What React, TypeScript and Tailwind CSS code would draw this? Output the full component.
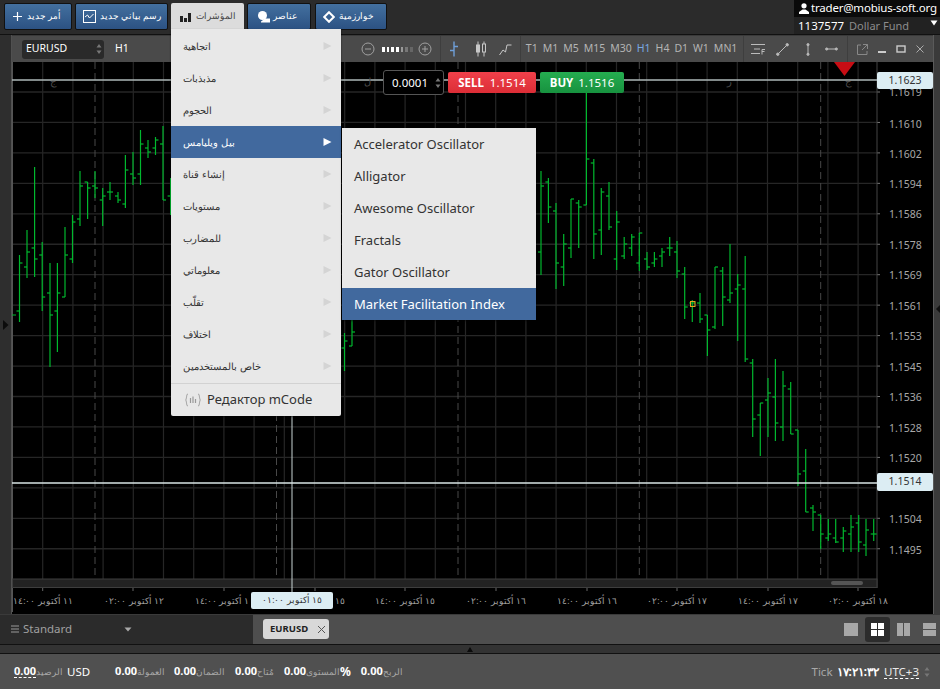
import React from "react";

const sans = "font-['Noto_Sans','DejaVu_Sans',sans-serif]";
const deja = "font-['DejaVu_Sans',sans-serif]";

// x, high, low, open, close
const bars: number[][] = [
  [19.5, 255, 322, 311, 263], [27, 230, 278, 267, 252], [34.6, 167, 277, 248, 259], [42.2, 242, 311, 255, 297],
  [50, 263, 367, 293, 315], [57.4, 263, 352, 311, 293], [65, 227, 297, 297, 255], [72.5, 215, 263, 259, 222],
  [80, 171, 226, 219, 186], [87.6, 182, 219, 182, 188], [95, 171, 198, 186, 188], [102.7, 188, 226, 200, 196],
  [110, 182, 200, 192, 192], [118, 192, 203, 196, 200], [125.4, 155, 208, 204, 170], [133, 152, 185, 174, 178],
  [140.5, 130, 185, 174, 144], [148, 140, 158, 148, 152], [155.5, 137, 155, 148, 140], [163, 126, 200, 144, 200],
  [170.6, 178, 215, 196, 196],
  [344.5, 333, 371, 348, 341], [352, 320, 346, 346, 332],
  [541, 171, 275, 252, 186], [548.4, 178, 223, 182, 207], [556, 203, 289, 211, 263], [563.7, 234, 286, 267, 244],
  [571, 199, 258, 248, 199], [578.7, 200, 248, 203, 207], [586.4, 92, 205, 205, 159], [593.8, 159, 259, 163, 234],
  [601.3, 188, 255, 230, 192], [609, 182, 230, 196, 227], [616.7, 211, 270, 259, 222], [624.2, 237, 259, 256, 244],
  [631.7, 234, 256, 248, 237], [639.3, 233, 271, 263, 233], [647, 252, 270, 259, 267], [654.4, 252, 267, 263, 259],
  [662, 248, 267, 256, 252], [669.7, 237, 256, 248, 248], [677, 241, 278, 252, 271], [684.7, 267, 319, 274, 307],
  [692.3, 300, 322, 303, 303], [700, 293, 323, 303, 319], [707.4, 315, 356, 315, 330], [715, 267, 329, 327, 267],
  [722.7, 267, 326, 271, 297], [730, 244, 303, 300, 293], [737.7, 274, 341, 289, 285], [745.2, 256, 362, 289, 359],
  [752.7, 359, 437, 363, 419], [760.3, 403, 456, 415, 403], [768, 378, 437, 400, 393], [775.4, 359, 441, 397, 423],
  [783, 371, 441, 427, 386], [790.7, 382, 434, 389, 434], [798, 430, 486, 430, 474], [805.7, 449, 512, 471, 512],
  [813, 505, 531, 508, 512], [820.7, 515, 549, 515, 534], [828.3, 519, 541, 538, 534], [835.7, 519, 543, 538, 542],
  [843.3, 527, 552, 538, 531], [851, 515, 552, 534, 527], [858.7, 515, 552, 523, 542], [866, 519, 556, 545, 530],
  [873.7, 519, 541, 534, 534],
];

const prices: [string, number][] = [
  ["1.1619", 92], ["1.1610", 123.5], ["1.1602", 153.5], ["1.1594", 184], ["1.1586", 214], ["1.1578", 245],
  ["1.1569", 275], ["1.1561", 305.5], ["1.1553", 336], ["1.1545", 367], ["1.1536", 397], ["1.1528", 428],
  ["1.1520", 458], ["1.1504", 519], ["1.1495", 550],
];

const times: [string, number][] = [
  ["١١ أكتوبر ١٤:٠٠", 43], ["١٢ أكتوبر ٠٢:٠٠", 134], ["١ أكتوبر ١٤:٠٠", 222], ["١٥", 340],
  ["١٥ أكتوبر ١٤:٠٠", 405], ["١٦ أكتوبر ٠٢:٠٠", 496], ["١٦ أكتوبر ١٤:٠٠", 587], ["١٧ أكتوبر ٠٢:٠٠", 677],
  ["١٧ أكتوبر ١٤:٠٠", 768], ["١٨ أكتوبر ٠٢:٠٠", 858],
];

const marks: [string, number][] = [["ج", 53], ["ل", 367], ["ر", 730], ["ج", 848]];

const menuItems = ["اتجاهية", "مذبذبات", "الحجوم", "بيل ويليامس", "إنشاء قناة", "مستويات", "للمضارب", "معلوماتي", "تقلّب", "اختلاف", "خاص بالمستخدمين"];
const subItems = ["Accelerator Oscillator", "Alligator", "Awesome Oscillator", "Fractals", "Gator Oscillator", "Market Facilitation Index"];
const frames = ["T1", "M1", "M5", "M15", "M30", "H1", "H4", "D1", "W1", "MN1"];

const hLines = Array.from({ length: 16 }, (_, i) => 92 + i * 30.45);
const vLines = Array.from({ length: 28 }, (_, i) => 42.7 + i * 30.2);
const dashed = [95, 276.5, 458, 639.3, 820.7];
const ticks = [42.7, 133, 224, 315, 405, 496, 587, 677, 768, 858];

const TopButton = ({ icon, className }: { icon: React.ReactNode; className: string }) => (
  <div className={`h-[27px] flex items-center border border-[#111] rounded-[2px] bg-gradient-to-b from-[#43709f] to-[#2c5283] text-white text-[8.5px] ${deja} ${className}`}>
    {icon}
  </div>
);

const Updown = ({ className }: { className?: string }) => (
  <svg width="6" height="12" viewBox="0 0 6 12" className={className}>
    <path d="M3 1 L5.5 4.5 H0.5 Z M3 11 L5.5 7.5 H0.5 Z" fill="#777" />
  </svg>
);

const Stat = ({ value, label, className }: { value: string; label: string; className: string }) => (
  <div className={`flex items-center ${className}`}>
    <span className={`text-[11px] font-bold text-white ${deja}`}>{value}</span>
    <span className={`text-[9px] text-[#a8a8a8] ${deja}`}>{label}</span>
  </div>
);

export default function App() {
  return (
    <div className="w-[940px] h-[689px] overflow-hidden flex flex-col bg-[#2a2a2a] relative">
      {/* top bar */}
      <div className="h-[35px] shrink-0 flex justify-between bg-[#2b2b2b] border-b border-[#111]">
        <div className="flex items-start pt-[3px] pl-[4px] gap-[3px]">
          <TopButton
            className="w-[68px] pl-[7px] gap-[4px]"
            icon={
              <>
                <svg width="11" height="11" viewBox="0 0 11 11"><path d="M5.5 1V10M1 5.5H10" stroke="#fff" strokeWidth="1.2" /></svg>
                <span>أمر جديد</span>
              </>
            }
          />
          <TopButton
            className="w-[93px] pl-[7px] gap-[4px]"
            icon={
              <>
                <svg width="13" height="13" viewBox="0 0 13 13" fill="none" stroke="#fff"><rect x="0.5" y="0.5" width="12" height="12" /><path d="M2 7 L4.5 5 L6.5 8 L10.5 4" /></svg>
                <span>رسم بياني جديد</span>
              </>
            }
          />
          <div className={`w-[73px] h-[27px] flex items-center pl-[9px] gap-[5px] bg-[#dcdcdc] rounded-t-[2px] text-[#444] text-[8.5px] ${deja}`}>
            <svg width="11" height="10" viewBox="0 0 11 10" fill="#222"><rect x="0" y="4" width="3" height="6" /><rect x="4" y="6" width="3" height="4" /><rect x="8" y="1" width="3" height="9" /></svg>
            <span>المؤشرات</span>
          </div>
          <TopButton
            className="w-[64px] pl-[9px] gap-[2px]"
            icon={
              <>
                <svg width="14" height="12" viewBox="0 0 14 12" fill="#fff"><circle cx="5.5" cy="4.5" r="4.5" /><path d="M4 10.5 L8 7.5 H13 V11.5 H4 Z" /></svg>
                <span>عناصر</span>
              </>
            }
          />
          <TopButton
            className="ml-[1px] w-[72px] pl-[7px] gap-[4px]"
            icon={
              <>
                <svg width="12" height="12" viewBox="0 0 12 12" fill="none" stroke="#fff" strokeWidth="2"><path d="M6 1.2 L10.8 6 L6 10.8 L1.2 6 Z" /></svg>
                <span>خوارزمية</span>
              </>
            }
          />
        </div>
        <div className={`w-[146px] h-[34px] bg-[#0a0a0a] flex flex-col text-[11.5px] leading-[16px] ${deja}`}>
          <div className="flex items-center h-[16px] pl-[5px] gap-[2px] text-white">
            <svg width="10" height="11" viewBox="0 0 10 11" fill="#fff" className="shrink-0"><circle cx="5" cy="2.8" r="2.6" /><path d="M0 11 V9 L3.5 6.5 H6.5 L10 9 V11 Z" /></svg>
            <span className="whitespace-nowrap tracking-[-0.2px]">trader@mobius-soft.org</span>
          </div>
          <div className="flex items-center h-[17px] mt-[1px] pl-[4px] bg-[#222] relative">
            <span className="text-white">1137577</span>
            <span className="ml-[5px] text-[11px] text-[#8c8c8c]">Dollar Fund</span>
            <svg width="8" height="6" viewBox="0 0 8 6" className="absolute right-[2px] top-[3px]"><path d="M0.5 0.5 H7.5 L4 5.5 Z" fill="#fff" /></svg>
          </div>
        </div>
      </div>

      {/* middle */}
      <div className="h-[579px] shrink-0 flex">
        <div className="w-[12px] shrink-0 bg-[#2e2e2e] border-r border-[#505050] flex items-center">
          <svg width="6" height="10" viewBox="0 0 6 10" className="ml-[3px]"><path d="M0 0 L5.5 5 L0 10 Z" fill="#0c0c0c" /></svg>
        </div>
        <div className="w-[921px] shrink-0 flex flex-col">
          {/* toolbar */}
          <div className="h-[27px] shrink-0 bg-[#4a4a4a] border-t border-[#3a3a3a] flex items-center relative">
            <div className={`ml-[10px] w-[82px] h-[19px] bg-[#2a2a2a] rounded-[3px] flex items-center justify-between pl-[4px] pr-[2px] text-white text-[10.5px] ${deja}`}>
              <span>EURUSD</span>
              <Updown />
            </div>
            <span className={`ml-[11px] text-white text-[10.5px] ${deja}`}>H1</span>

            <div className="ml-[232px] flex items-center gap-[5px]">
              <svg width="14" height="14" viewBox="0 0 14 14" fill="none" stroke="#a0a0a0"><circle cx="7" cy="7" r="6" /><path d="M4 7H10" /></svg>
              <div className="flex gap-[2px] w-[33px] pl-[2px]">
                <i className="w-[3px] h-[5px] bg-white" /><i className="w-[3px] h-[5px] bg-white" /><i className="w-[3px] h-[5px] bg-white" /><i className="w-[3px] h-[5px] bg-white" />
                <i className="w-[3px] h-[5px] bg-[#999]" /><i className="w-[3px] h-[5px] bg-[#777]" /><i className="w-[3px] h-[5px] bg-[#666]" />
              </div>
              <svg width="14" height="14" viewBox="0 0 14 14" fill="none" stroke="#a0a0a0"><circle cx="7" cy="7" r="6" /><path d="M4 7H10M7 4V10" /></svg>
            </div>
            <div className="ml-[8px] h-[26px] w-[1px] bg-[#3e3e3e]" />
            <svg width="10" height="16" viewBox="0 0 10 16" stroke="#6f9fd8" fill="none" strokeWidth="1.4" className="ml-[8px]"><path d="M5 0.5V15.5M1 9.5H5M5 5.5H9" /></svg>
            <svg width="12" height="16" viewBox="0 0 12 16" stroke="#c8c8c8" fill="none" className="ml-[16px]"><path d="M3 0.5V15.5M9 0.5V15.5" /><rect x="1.5" y="4" width="3" height="7" fill="#c8c8c8" /><rect x="7.5" y="3" width="3" height="8" fill="#4a4a4a" /></svg>
            <svg width="13" height="13" viewBox="0 0 13 13" stroke="#c8c8c8" fill="none" className="ml-[12px]"><path d="M0.5 12 L4 7 L6.5 9 L8 2 H12.5" /></svg>
            <div className="ml-[8px] h-[26px] w-[1px] bg-[#3e3e3e]" />
            <div className={`ml-[5px] flex items-center gap-[5px] text-[10.5px] text-[#b4b4b4] ${deja}`}>
              {frames.map((f) => (
                <span key={f} className={f === "H1" ? "text-[#79a9e0]" : ""}>{f}</span>
              ))}
            </div>
            <div className="ml-[6px] h-[26px] w-[1px] bg-[#3e3e3e]" />
            <svg width="14" height="12" viewBox="0 0 14 12" stroke="#bbb" fill="none" className="ml-[7px]"><path d="M0 1.5H14M3 6H9M0 10.5H9M11 11.5V6.5H14M11 8.5H13.5" /></svg>
            <svg width="13" height="13" viewBox="0 0 13 13" stroke="#bbb" fill="#bbb" className="ml-[11px]"><path d="M2 11L11 2" /><circle cx="1.8" cy="11.2" r="1.2" /><circle cx="11.2" cy="1.8" r="1.2" /></svg>
            <svg width="6" height="13" viewBox="0 0 6 13" stroke="#bbb" fill="#bbb" className="ml-[16px]"><path d="M3 2V11" /><circle cx="3" cy="1.7" r="1.1" /><circle cx="3" cy="11.3" r="1.1" /></svg>
            <svg width="13" height="6" viewBox="0 0 13 6" stroke="#bbb" fill="#bbb" className="ml-[14px]"><path d="M2 3H11" /><circle cx="1.7" cy="3" r="1.1" /><circle cx="11.3" cy="3" r="1.1" /></svg>
            <div className="ml-[9px] h-[26px] w-[1px] bg-[#3e3e3e]" />
            <svg width="11" height="11" viewBox="0 0 11 11" stroke="#888" fill="none" className="ml-[9px]"><path d="M4 1H0.5V10.5H10V7M6 0.5H10.5V5M10.5 0.5L5 6" /></svg>
            <svg width="10" height="10" viewBox="0 0 10 10" className="ml-[9px]"><rect x="1" y="7" width="8" height="2" fill="#ccc" /></svg>
            <svg width="10" height="10" viewBox="0 0 10 10" fill="none" stroke="#ccc" className="ml-[9px]"><rect x="1" y="2" width="8" height="6" strokeWidth="1.4" /></svg>
            <svg width="10" height="10" viewBox="0 0 10 10" stroke="#aaa" className="ml-[9px]"><path d="M1.5 1.5L8.5 8.5M8.5 1.5L1.5 8.5" /></svg>
          </div>

          {/* chart */}
          <div className="relative flex-1 bg-black overflow-hidden">
            <svg viewBox="12 62 921 552" width="921" height="552" className="block">
              {hLines.map((y) => (y < 578 ? <line key={y} x1="12" x2="877" y1={y} y2={y} stroke="#262626" strokeWidth="1.3" /> : null))}
              {vLines.map((x) => <line key={x} x1={x} x2={x} y1="62" y2="579" stroke="#262626" strokeWidth="1.2" />)}
              {dashed.map((x) => <line key={x} x1={x} x2={x} y1="62" y2="579" stroke="#484848" strokeDasharray="7 4" />)}
              {hLines.map((y) => (y < 578 ? <line key={`t${y}`} x1="877" x2="880" y1={y} y2={y} stroke="#777" /> : null))}
              <line x1="12.5" x2="12.5" y1="62" y2="612" stroke="#555" />
              <line x1="877" x2="877" y1="62" y2="588" stroke="#444" />
              {bars.map(([x, h, l, o, c]) => (
                <g key={x} stroke="#00b82e" strokeWidth="1.2">
                  <line x1={x} x2={x} y1={h} y2={l} />
                  <line x1={x - 3} x2={x} y1={o} y2={o} />
                  <line x1={x} x2={x + 3} y1={c} y2={c} />
                </g>
              ))}
              <line x1="12" x2="16" y1="315" y2="315" stroke="#00b82e" />
              <rect x="690.5" y="301.5" width="4.5" height="5" fill="none" stroke="#e8a020" />
              <rect x="12.5" y="579" width="864.5" height="8.5" fill="#222" stroke="#3e3e3e" />
              <rect x="831" y="581" width="32" height="4" rx="2" fill="#555" />
              {ticks.map((x) => <line key={x} x1={x} x2={x} y1="588" y2="591" stroke="#666" />)}
              <line x1="292" x2="292" y1="400" y2="593" stroke="#c8d4d4" />
              <line x1="12" x2="877" y1="80" y2="80" stroke="#aeb8b8" strokeWidth="1.4" />
              <line x1="12" x2="877" y1="483" y2="483" stroke="#d8e4e4" strokeWidth="1.6" />
              <path d="M834 62H855L844.5 76Z" fill="#c80d14" />
            </svg>

            {marks.map(([m, x]) => (
              <span key={x} style={{ left: x - 12 - 3, top: 12 }} className={`absolute text-[10px] text-[#4c4c4c] ${deja}`}>{m}</span>
            ))}
            {prices.map(([p, y]) => (
              <span key={p} style={{ top: y - 62 - 8 }} className={`absolute left-[877px] leading-[16px] text-[10.5px] text-[#a8a8a8] ${deja}`}>{p}</span>
            ))}
            {times.map(([t, x]) => (
              <span key={t} dir="rtl" style={{ left: x - 12 - 31, top: 532 }} className={`absolute w-[62px] text-center leading-[14px] text-[8.5px] text-[#a0a0a0] whitespace-nowrap ${deja}`}>{t}</span>
            ))}

            <div className={`absolute left-[865px] top-[10px] w-[56px] h-[17px] bg-[#dcedf3] rounded-[2px] flex items-center justify-center text-[10.5px] text-[#333] ${deja}`}>1.1623</div>
            <div className={`absolute left-[865px] top-[411px] w-[56px] h-[18px] bg-[#dcedf3] rounded-[2px] flex items-center justify-center text-[10.5px] text-[#333] ${deja}`}>1.1514</div>
            <div dir="rtl" className={`absolute left-[239px] top-[530px] w-[82px] h-[17px] bg-[#dcedf3] rounded-[2px] flex items-center justify-center text-[8.5px] text-[#333] ${deja}`}>١٥ أكتوبر ٠١:٠٠</div>

            <div className={`absolute left-[371px] top-[8px] w-[61px] h-[25px] bg-black border border-[#555] rounded-[3px] flex items-center justify-between pl-[8px] pr-[2px] text-[11.5px] text-white ${deja}`}>
              <span>0.0001</span>
              <Updown />
            </div>
            <div className={`absolute left-[436px] top-[10px] w-[88px] h-[21px] bg-gradient-to-b from-[#f0404a] to-[#dc2d36] rounded-[2px] flex items-center justify-center gap-[6px] text-white text-[11.5px] ${deja}`}>
              <b>SELL</b><span>1.1514</span>
            </div>
            <div className={`absolute left-[528px] top-[10px] w-[84px] h-[21px] bg-gradient-to-b from-[#25ad50] to-[#17923f] rounded-[2px] flex items-center justify-center gap-[5px] text-white text-[11.5px] ${deja}`}>
              <b>BUY</b><span>1.1516</span>
            </div>
          </div>
        </div>
        <div className="w-[7px] shrink-0 bg-[#3a3a3a] border-l border-[#5a5a5a] flex items-center justify-end">
          <svg width="4" height="8" viewBox="0 0 4 8" className="mb-[32px]"><path d="M4 0 L0 4 L4 8 Z" fill="#111" /></svg>
        </div>
      </div>

      {/* tabs */}
      <div className="h-[31px] shrink-0 flex border-t border-[#3a3a3a] border-b border-b-[#111]">
        <div className={`w-[253px] shrink-0 bg-[#2b2b2b] flex items-center pl-[11px] pb-[1px] text-[11.5px] text-[#a0a0a0] ${deja}`}>
          <svg width="8" height="8" viewBox="0 0 8 8" stroke="#9a9a9a"><path d="M0 1H8M0 4H8M0 7H8" /></svg>
          <span className="ml-[4px]">Standard</span>
          <svg width="8" height="5" viewBox="0 0 8 5" className="ml-[52px]"><path d="M0.5 0.5H7.5L4 4.5Z" fill="#a8a8a8" /></svg>
        </div>
        <div className="flex-1 bg-[#4e4e4e] flex items-center pl-[10px] pb-[1px]">
          <div className={`w-[66px] h-[20px] bg-[#d8d8d8] rounded-[3px] flex items-center justify-between pl-[7px] pr-[3px] text-[9.5px] font-bold text-[#222] ${deja}`}>
            <span>EURUSD</span>
            <svg width="9" height="9" viewBox="0 0 9 9" stroke="#555"><path d="M1 1L8 8M8 1L1 8" /></svg>
          </div>
          <div className="ml-auto mr-[4px] flex items-center gap-[7px]">
            <div className="w-[14px] h-[13px] bg-[#a8a8a8]" />
            <div className="w-[25px] h-[25px] rounded-[3px] bg-[#2c2c2c] flex items-center justify-center">
              <div className="w-[13px] h-[13px] grid grid-cols-2 gap-[1px]">
                <i className="bg-white" /><i className="bg-white" /><i className="bg-white" /><i className="bg-white" />
              </div>
            </div>
            <div className="w-[13px] h-[13px] grid grid-cols-2 gap-[1px]"><i className="bg-[#a8a8a8]" /><i className="bg-[#a8a8a8]" /></div>
            <div className="ml-[6px] w-[13px] h-[13px] grid grid-rows-2 gap-[1px]"><i className="bg-[#a8a8a8]" /><i className="bg-[#a8a8a8]" /></div>
          </div>
        </div>
      </div>

      {/* collapse strip */}
      <div className="h-[9px] shrink-0 bg-[#333] border-b border-[#111] flex justify-center">
        <svg width="6" height="5" viewBox="0 0 6 5" className="mt-[2px]"><path d="M3 0L6 5H0Z" fill="#0c0c0c" /></svg>
      </div>

      {/* status bar */}
      <div className="flex-1 bg-[#505050] relative flex items-center">
        <div className="pl-[14px] flex items-center">
          <span className={`text-[11px] font-bold text-white border-b border-dashed border-white leading-[12px] ${deja}`}>0.00</span>
          <span className={`text-[9px] text-[#a8a8a8] ${deja}`}>الرصيد</span>
          <span className={`ml-[4px] text-[11.5px] text-white ${deja}`}>USD</span>
        </div>
        <Stat className="ml-[25px]" value="0.00" label="العمولة" />
        <Stat className="ml-[9px]" value="0.00" label="الضمان" />
        <Stat className="ml-[10px]" value="0.00" label="مُتاح" />
        <Stat className="ml-[10px]" value="0.00" label="المستوى" />
        <span className={`text-[12px] font-bold text-white ${deja}`}>%</span>
        <Stat className="ml-[10px]" value="0.00" label="الربح" />
        <div className={`ml-auto mr-[10px] flex items-center text-[11.5px] ${deja}`}>
          <span className="text-[#a8a8a8]">Tick</span>
          <span className="ml-[4px] text-[11.5px] font-bold text-white">١٧:٢١:٣٢</span>
          <span className="ml-[5px] text-[#e8e8e8] border-b border-dashed border-white leading-[13px]">UTC+3</span>
          <Updown className="ml-[5px]" />
        </div>
      </div>

      {/* indicators menu */}
      <div className={`absolute left-[171px] top-[29px] w-[170px] bg-[#e8e8e8] shadow-[0_1px_2px_rgba(0,0,0,0.6)] rounded-b-[2px] pt-[1px] ${deja}`}>
        {menuItems.map((m) => {
          const active = m === "بيل ويليامس";
          return (
            <div key={m} className={`h-[32px] flex items-center justify-between pl-[12px] pr-[9px] text-[10px] ${active ? "bg-[#41699e] text-white" : "text-[#333]"}`}>
              <span>{m}</span>
              <svg width="9" height="8" viewBox="0 0 9 8"><path d="M0.5 0 L8.5 4 L0.5 8 Z" fill={active ? "#fff" : "#d4d4d4"} /></svg>
            </div>
          );
        })}
        <div className={`h-[33px] mt-[1px] border-t border-[#d2d2d2] flex items-center pl-[14px] gap-[6px] text-[13px] text-[#333] ${sans}`}>
          <svg width="16" height="14" viewBox="0 0 16 14" fill="none" stroke="#999"><path d="M3 1C1 1 2 6 0.5 7C2 8 1 13 3 13M13 1C15 1 14 6 15.5 7C14 8 15 13 13 13" /><path d="M5.5 5V10M8 3.5V10M10.5 6V10" strokeWidth="1.2" /></svg>
          <span>Редактор mCode</span>
        </div>
      </div>

      {/* williams submenu */}
      <div className={`absolute left-[342px] top-[128px] w-[194px] bg-[#e8e8e8] shadow-[0_1px_2px_rgba(0,0,0,0.6)] text-[13px] ${sans}`}>
        {subItems.map((s) => (
          <div key={s} className={`h-[32px] flex items-center pl-[12px] pt-[1px] ${s === "Market Facilitation Index" ? "bg-[#41699e] text-white" : "text-[#333]"}`}>{s}</div>
        ))}
      </div>
    </div>
  );
}
